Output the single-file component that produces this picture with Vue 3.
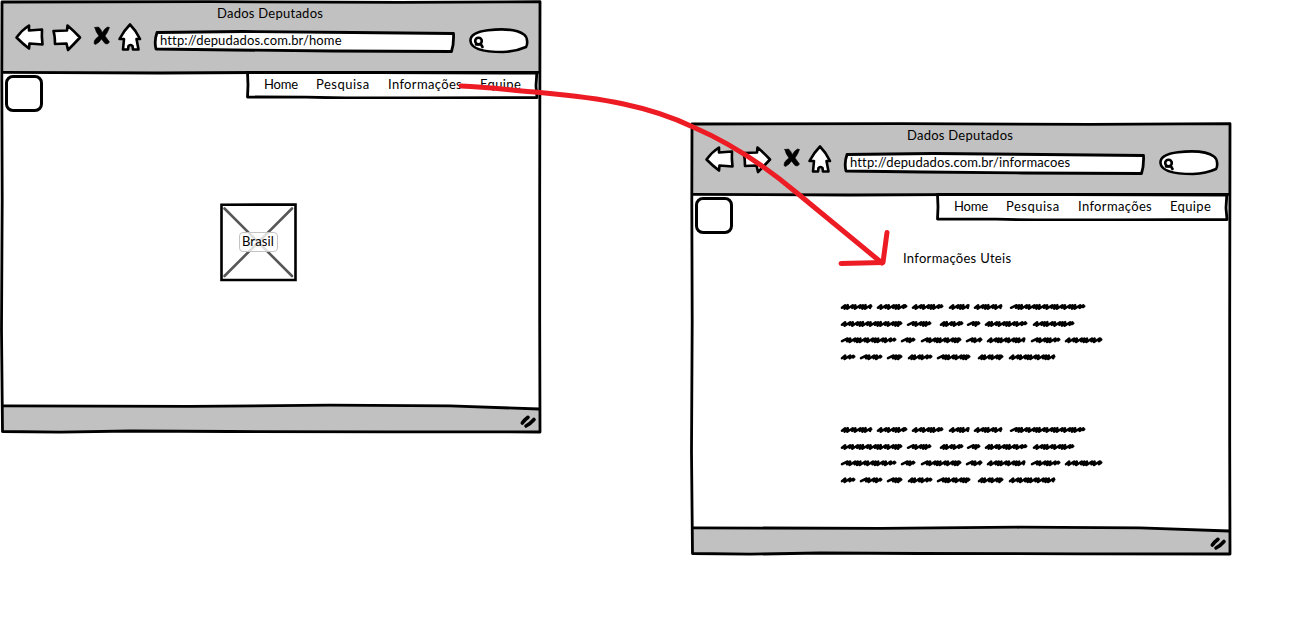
<script setup>
const menu = ['Home', 'Pesquisa', 'Informações', 'Equipe']
const windows = [
  { id: 'home', url: 'http://depudados.com.br/home' },
  { id: 'info', url: 'http://depudados.com.br/informacoes' }
]

// Each placeholder word: [start, end] inside its line
const lines = [
  [[1, 32], [37, 67], [72, 103], [109, 129], [134, 162], [170, 245]],
  [[1, 62], [67, 91], [100, 123], [127, 140], [145, 187], [193, 234]],
  [[1, 56], [61, 75], [81, 121], [126, 142], [147, 185], [191, 220], [225, 262]],
  [[1, 15], [20, 42], [47, 62], [68, 92], [97, 130], [138, 163], [169, 215]]
]
const lineY = [6.7, 23.7, 40, 57]

function scribble([a, b], row) {
  const y = lineY[row]
  let x = a + 1
  let i = a + row
  let d = `M${x} ${y + 1.1}`
  while (x < b - 6) {
    const wide = (i * 7) % 5 < 2
    const up = wide ? 5.6 : 3.2
    const drop = wide ? 1.2 : 2
    d += `L${(x + up).toFixed(1)} ${y - 1.5}L${(x + up - 0.6).toFixed(1)} ${y + drop}`
    x += up - 0.6
    i++
  }
  return d + `L${b - 1.6} ${y - 1.3}L${b - 1.9} ${y + 0.4}L${b - 0.8} ${y - 0.4}`
}
const scribblePath = lines.map((l, r) => l.map(w => scribble(w, r)).join('')).join('')
</script>

<template>
  <main class="board">
    <section v-for="w in windows" :key="w.id" class="window" :class="w.id">
      <svg class="frame" viewBox="0 0 544 436">
        <path class="panel" d="M2.500 2.500L540 2L540 432L3 431.500L1.800 330L2.500 200L2 80Z" />
        <path class="bar" d="M2.500 2.500H540V72.500L300 72L160 73L3 72.300Z" />
        <path class="bar" d="M3 406L190 406.500L330 405.500L450 406.200L540 409L540 432L230 431L130 431L60 432L3 431.500Z" />
        <path class="line" d="M2 2L210 1.700L400 2.300L540 1.700L539.700 200L539.700 320L540 432L390 431.800L230 431.500L130 431L60 432.200L2.500 431.500L1.500 330L2.200 200L1.800 80Z" />
        <path class="line" d="M3 72.300L160 73L300 72.300H539M3 405.800L190 406.400L330 405.200L450 405.900L539 409" />
        <path class="grip" d="M522.300 423Q524.500 420 528 417.300M526 426Q530 424 534 419.500" />
      </svg>
      <header class="chrome">
        <h1 class="title">Dados Deputados</h1>
        <div class="toolbar">
          <svg class="tools" viewBox="0 0 130 32">
            <g class="icon">
              <path d="M2.500 15.500Q8 8 15 3.500L15 8.500L28 7.500Q27.500 14 28.500 22.500L15.500 21.500L15 26.500Q9 22 2.500 15.500Z" />
              <path d="M40 9L53 8.500L53.500 3.500Q60 9 66 15.500Q60 22 54 28L52.500 21.500L41 22Q41 14 39.500 9Z" />
              <path d="M105.500 17Q110 8.500 116 2.500Q122 8.500 126 17L122.500 17L124.500 27.500L119 27.500L118.500 24Q116 22 114.500 24L114 27.500L109 27.500L110 17Z" />
            </g>
            <path class="cross" d="M80.800 5.500L84.500 5Q87 7 88.300 10.500Q90.500 6.500 93.500 5L95.500 5.500Q93.500 11 91 14L95.500 20L93.500 22L91 21.500Q89 19 87.500 17Q85.500 20.500 81.500 22.500L80 21.500L80.500 18.500Q82 16 85 14Q81.500 9.500 80.800 5.500Z" />
          </svg>
          <div class="address">
            <svg class="outline" viewBox="0 0 304 24"><path d="M4 3.500L90 2.500L200 3.500L300.500 4.500Q301 15 298.500 22.500L180 22L80 21L3 20Q1 12 4 3.500Z" /></svg>
            <span class="url">{{ w.url }}</span>
          </div>
          <svg class="search" viewBox="0 0 62 28">
            <path class="pill" d="M2.500 14C2 8 9 4.500 20 3.200C36 1.500 50 3 56 7.500C59.500 10 60 17 58 20Q48 24.500 35 25C17 25 3 22 2.500 14Z" />
            <circle class="lens" cx="10.500" cy="14" r="3.300" />
            <path class="lens" d="M8 17.500L13 17.300L14.500 20" />
          </svg>
        </div>
      </header>
      <div class="top">
        <div class="logo"></div>
        <nav class="menu">
          <svg class="outline" viewBox="0 0 293 28"><path d="M1.500 1.500L130 1.500L290.800 2.200L290 15L291 26.500L180 27L100 27L60 26.200L1.500 26L2 14Z" /></svg>
          <a v-for="m in menu" :key="m" :class="m.slice(0, 4).toLowerCase()">{{ m }}</a>
        </nav>
      </div>
      <div v-if="w.id === 'home'" class="picture">
        <svg class="outline" viewBox="0 0 78 80">
          <path class="diag" d="M5.500 6.500L73 74M73 6.500L5.500 74" />
          <path class="box" d="M2.500 2.800L76.500 2.500L76.500 78L2.500 78Z" />
        </svg>
        <span class="caption">Brasil</span>
      </div>
      <article v-else class="content">
        <h2 class="heading">Informações Uteis</h2>
        <svg v-for="n in 2" :key="n" class="scribble" viewBox="0 0 266 64"><path :d="scribblePath" /></svg>
      </article>
    </section>
    <svg class="link" viewBox="0 0 1298 623">
      <path d="M461 86C490 87 516 91 540 92.500C602 98 650 106 693 127C728 142 765 166 797 193L882 263" />
      <path d="M841 263.500L862 263L883 262.500L887 232.500" />
    </svg>
  </main>
</template>

<style scoped>
.board {
  position: relative;
  width: 1298px;
  height: 623px;
  overflow: hidden;
  background: #fff;
  color: #000;
  font-family: Lato, "Open Sans", sans-serif;
  font-size: 13px;
  line-height: 16px;
}
svg { display: block; fill: none; stroke: #000; stroke-linejoin: round; stroke-linecap: round; }
.window { position: absolute; width: 544px; height: 436px; isolation: isolate; }
.window.home { left: 0; top: 0; }
.window.info { left: 690px; top: 122px; }
.frame { position: absolute; inset: 0; z-index: -1; width: 544px; height: 436px; }
.panel { fill: #fff; stroke: none; }
.bar { fill: #c1c1c1; stroke: none; }
.line { stroke-width: 2.8; }
.grip { stroke-width: 3.6; }
.chrome { height: 71px; padding-top: 5px; box-sizing: border-box; }
h1, h2 { margin: 0; font-size: 13px; font-weight: 400; white-space: nowrap; }
.title { width: 108px; margin-left: 217px; letter-spacing: 0.25px; }
.toolbar { display: flex; align-items: flex-start; margin-left: 14px; }
.tools { width: 130px; height: 32px; margin-top: 1px; }
.icon { fill: #fff; stroke-width: 2.6; }
.cross { fill: #000; stroke-width: 0.6; }
.address { position: relative; width: 304px; height: 24px; margin: 8px 0 0 9px; }
.outline { position: absolute; inset: 0; width: 100%; height: 100%; fill: #fff; stroke-width: 2.8; }
.url { position: relative; display: block; padding: 3px 0 0 7px; letter-spacing: 0.14px; white-space: nowrap; }
.search { width: 62px; height: 28px; margin: 6px 0 0 11px; }
.pill { fill: #fff; stroke-width: 2.6; }
.lens { stroke-width: 2.6; }
.top { display: flex; justify-content: space-between; height: 42px; padding: 0 5px 0 5px; }
.logo { box-sizing: border-box; width: 38px; height: 37px; margin-top: 4px; border: 3px solid #000; border-radius: 8px; background: #fff; }
.menu { position: relative; display: flex; box-sizing: border-box; width: 293px; height: 28px; padding: 5px 0 0 18px; }
.menu a { position: relative; flex: none; letter-spacing: 0.35px; white-space: nowrap; }
.menu .home { width: 52px; letter-spacing: -0.2px; }
.menu .pesq { width: 72px; letter-spacing: 0.5px; }
.menu .info { width: 92px; }
.picture { position: relative; display: flex; align-items: center; justify-content: center; width: 78px; height: 80px; margin: 89px 0 0 219px; }
.diag { stroke: #575757; stroke-width: 2.6; }
.box { fill: none; stroke-width: 2.6; stroke-linejoin: miter; }
.picture .outline { fill: none; }
.caption { position: relative; box-sizing: border-box; width: 39px; height: 20px; margin-top: -1px; border: 1px solid #c4c4c4; border-radius: 4px; background: rgba(255, 255, 255, .8); text-align: center; letter-spacing: 0.15px; line-height: 17px; }
.content { padding: 15px 0 0 150px; }
.heading { margin-left: 63px; letter-spacing: 0.3px; }
.scribble { width: 266px; height: 64px; margin-top: 34px; stroke-width: 2.5; }
.scribble + .scribble { margin-top: 59px; }
.link { position: absolute; inset: 0; width: 1298px; height: 623px; stroke: #ed1c24; stroke-width: 5; pointer-events: none; }
</style>
